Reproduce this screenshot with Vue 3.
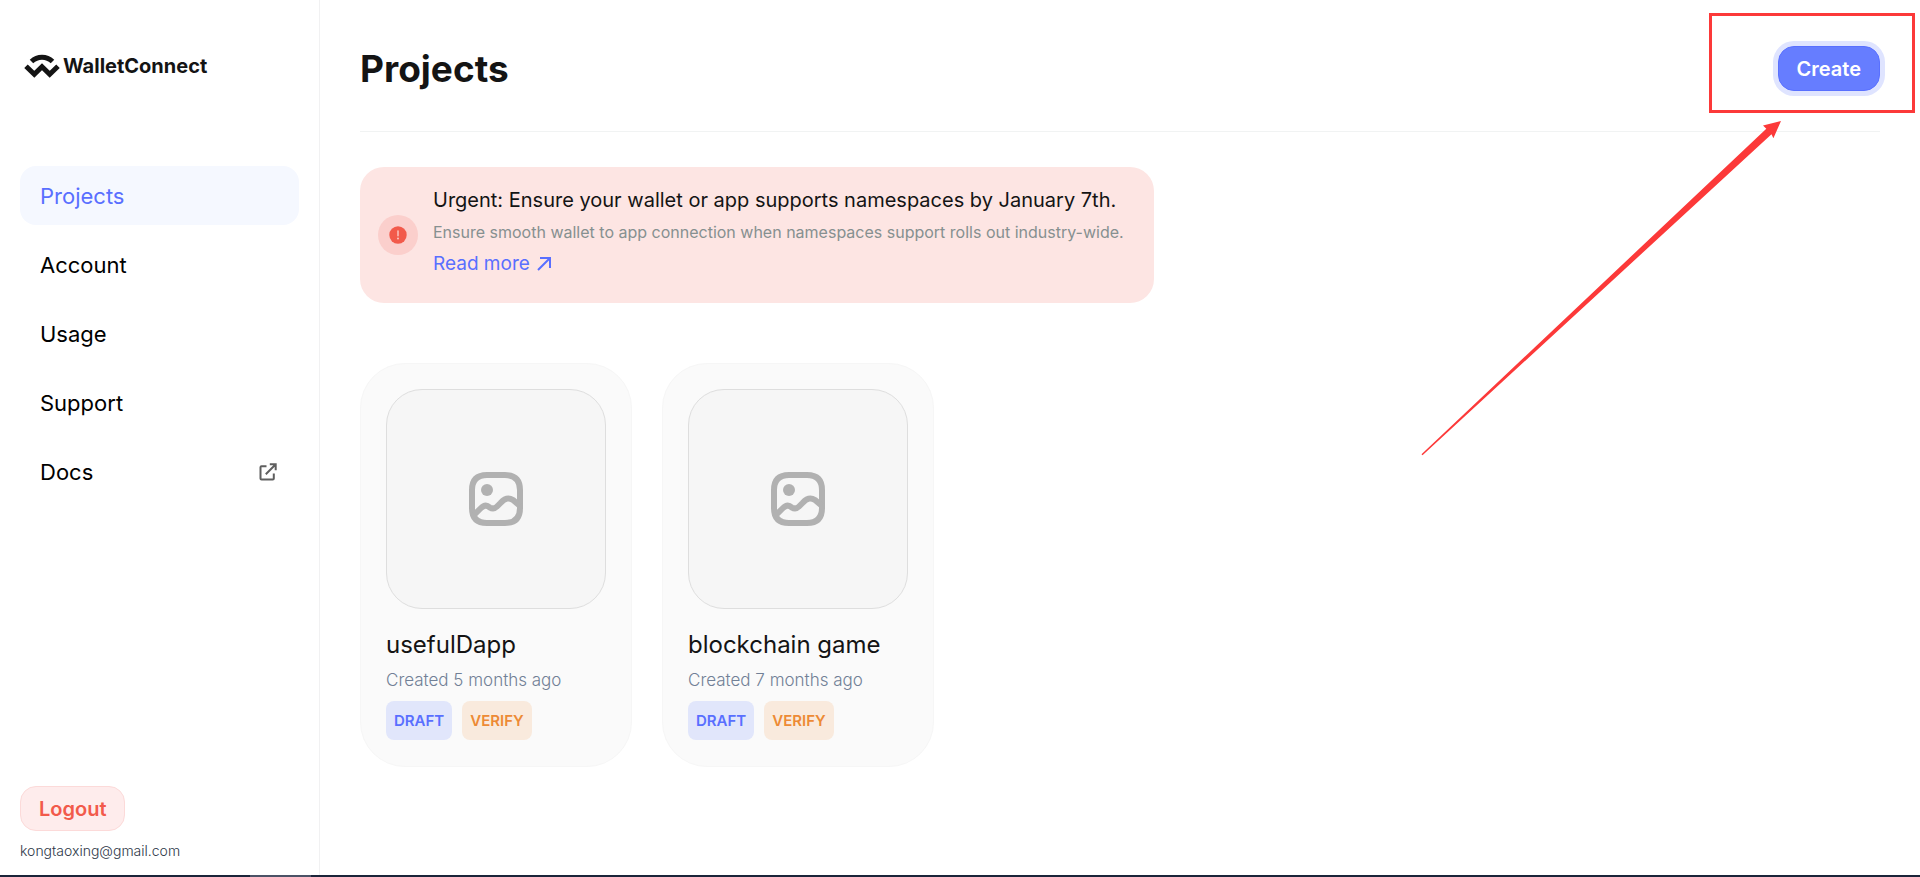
<script setup>
const navItems = [
  { label: 'Projects', active: true },
  { label: 'Account' },
  { label: 'Usage' },
  { label: 'Support' },
  { label: 'Docs', external: true },
]

const projects = [
  { name: 'usefulDapp', created: 'Created 5 months ago' },
  { name: 'blockchain game', created: 'Created 7 months ago' },
]
</script>

<template>
  <div class="screen">
    <div class="layout">
      <aside class="sidebar">
        <a class="logo" href="#">
          <svg class="logo-mark" viewBox="0 0 36 24" aria-hidden="true">
            <path d="M7.5 7.5C13.5 1.7 22.500 1.7 28.500 7.5" />
            <path d="M2 12.200L10.300 20.200L18 12.700L25.700 20.200L34 12.200" />
          </svg>
          <span class="logo-name">WalletConnect</span>
        </a>

        <nav class="nav">
          <a
            v-for="item in navItems"
            :key="item.label"
            class="nav-item"
            :class="{ active: item.active }"
            href="#"
          >
            <span>{{ item.label }}</span>
            <svg v-if="item.external" class="external" viewBox="0 0 18 18" aria-hidden="true">
              <path d="M7.500 3.200H2.500Q1.500 3.200 1.500 4.200V15.500Q1.500 16.500 2.500 16.500H13.800Q14.800 16.500 14.800 15.500V10.500" />
              <path d="M6.800 11.200L16.500 1.500M10.800 1.300H16.700V7.200" />
            </svg>
          </a>
        </nav>

        <div class="account">
          <button class="logout" type="button">Logout</button>
          <span class="email">kongtaoxing@gmail.com</span>
        </div>
      </aside>

      <main class="main">
        <header class="header">
          <h1>Projects</h1>
          <button class="create" type="button">Create</button>
        </header>

        <section class="banner">
          <span class="alert">
            <svg viewBox="0 0 18 18" aria-hidden="true">
              <circle cx="9" cy="9" r="8.700" fill="#f25a4b" />
              <path d="M9 5V9.800" stroke="#fbd5d2" stroke-width="1.300" stroke-linecap="round" />
              <circle cx="9" cy="12.500" r="0.900" fill="#fbd5d2" />
            </svg>
          </span>
          <div class="banner-text">
            <p class="banner-title">Urgent: Ensure your wallet or app supports namespaces by January 7th.</p>
            <p class="banner-sub">Ensure smooth wallet to app connection when namespaces support rolls out industry-wide.</p>
            <a class="read-more" href="#">
              Read more
              <svg viewBox="0 0 16 16" aria-hidden="true">
                <path d="M2 14L14 2M4 2H14V12" />
              </svg>
            </a>
          </div>
        </section>

        <section class="cards">
          <article v-for="project in projects" :key="project.name" class="card">
            <div class="thumb">
              <svg viewBox="0 0 54 54" aria-hidden="true">
                <path d="M18 3H36C46 3 51 8 51 18V36C51 46 46 51 36 51H18C8 51 3 46 3 36V18C3 8 8 3 18 3Z" />
                <path d="M5 43L11.500 36.500C15 33 18 33 20.500 35.300C23.500 37 25.500 37 28 34.500L31.500 31C36.500 25.500 40 25.500 44 28L50.500 33.500" />
                <circle cx="18" cy="18" r="6" />
              </svg>
            </div>
            <h2>{{ project.name }}</h2>
            <p class="created">{{ project.created }}</p>
            <div class="tags">
              <span class="tag draft">DRAFT</span>
              <span class="tag verify">VERIFY</span>
            </div>
          </article>
        </section>

        <div class="highlight"></div>
        <svg class="arrow" viewBox="0 0 360 335" aria-hidden="true">
          <path d="M0.500 333.300L345.300 7.700L342 4.500L360 0L352.400 17.200L350.500 13.200L1.500 334.300Z" />
        </svg>
      </main>
    </div>
    <div class="taskbar"><span></span></div>
  </div>
</template>

<style>
body {
  background: #fff;
}
</style>

<style scoped>
.screen {
  display: flex;
  flex-direction: column;
  min-height: 100vh;
  font-family: Inter, "Liberation Sans", sans-serif;
  color: #141414;
}

.screen *,
.screen {
  box-sizing: border-box;
}

h1,
h2,
p {
  margin: 0;
}

a {
  color: inherit;
  text-decoration: none;
}

button {
  font-family: inherit;
  cursor: pointer;
}

.layout {
  flex: 1;
  display: grid;
  grid-template-columns: 320px 1fr;
}

.sidebar {
  display: flex;
  flex-direction: column;
  padding: 54px 20px 15px;
  border-right: 1px solid #f1f1f2;
}

.logo {
  display: flex;
  align-items: center;
  gap: 3px;
  height: 24px;
  padding-left: 4px;
}

.logo-mark {
  width: 36px;
  height: 24px;
  fill: none;
  stroke: #141414;
  stroke-width: 5;
}

.logo-name {
  font-size: 20px;
  font-weight: 700;
  line-height: 24px;
}

.nav {
  display: flex;
  flex-direction: column;
  gap: 10px;
  margin-top: 88px;
}

.nav-item {
  display: flex;
  align-items: center;
  justify-content: space-between;
  height: 59px;
  padding: 0 22px 0 20px;
  border-radius: 16px;
  font-size: 22px;
  line-height: 28px;
  color: #000;
}

.nav-item.active {
  background: #f5f8ff;
  color: #596fff;
}

.external {
  width: 18px;
  height: 18px;
  fill: none;
  stroke: #5f5f5f;
  stroke-width: 2;
}

.account {
  display: flex;
  flex-direction: column;
  align-items: flex-start;
  gap: 11px;
  margin-top: auto;
}

.logout {
  height: 45px;
  padding: 0 18px;
  border: 1px solid #fcdad9;
  border-radius: 16px;
  background: #feecec;
  color: #f25a4b;
  font-size: 20px;
  font-weight: 600;
}

.email {
  font-size: 14px;
  font-weight: 300;
  line-height: 18px;
  color: #2d3748;
}

.main {
  position: relative;
  padding: 46px 40px 40px;
}

.header {
  display: flex;
  align-items: center;
  justify-content: space-between;
  padding-bottom: 40px;
  border-bottom: 1px solid #f1f3f3;
}

h1 {
  font-size: 37px;
  font-weight: 700;
  line-height: 44px;
}

.create {
  height: 45px;
  padding: 0 18px;
  border: 1px solid #5970ff;
  border-radius: 16px;
  background: #667dff;
  box-shadow: 0 0 0 5px #dfe4ff;
  color: #fff;
  font-size: 20px;
  font-weight: 600;
}

.banner {
  display: flex;
  align-items: center;
  gap: 15px;
  max-width: 794px;
  margin-top: 35px;
  padding: 18px;
  min-height: 136px;
  border-radius: 24px;
  background: #fde5e3;
}

.alert {
  display: grid;
  place-items: center;
  flex: none;
  width: 40px;
  height: 40px;
  border-radius: 50%;
  background: #fbcfcc;
}

.alert svg {
  width: 18px;
  height: 18px;
}

.banner-text {
  display: flex;
  flex-direction: column;
  gap: 4px;
  padding-bottom: 6px;
}

.banner-title {
  font-size: 20px;
  line-height: 28px;
}

.banner-sub {
  font-size: 16px;
  line-height: 28px;
  color: #869090;
}

.read-more {
  display: flex;
  align-items: center;
  gap: 6px;
  font-size: 19px;
  line-height: 28px;
  color: #596fff;
}

.read-more svg {
  width: 16px;
  height: 16px;
  fill: none;
  stroke: currentColor;
  stroke-width: 2;
}

.cards {
  display: flex;
  flex-wrap: wrap;
  gap: 30px;
  margin-top: 60px;
}

.card {
  width: 272px;
  padding: 25px 25px 26px;
  border: 1px solid #f6f6f6;
  border-radius: 45px;
  background: #fafafa;
}

.thumb {
  display: grid;
  place-items: center;
  height: 220px;
  border: 1px solid #dedede;
  border-radius: 36px;
  background: #f6f6f6;
}

.thumb svg {
  width: 54px;
  height: 54px;
}

.thumb path {
  fill: none;
  stroke: #b1b1b1;
  stroke-width: 6;
}

.thumb circle {
  fill: #b1b1b1;
}

h2 {
  margin-top: 21px;
  font-size: 24px;
  font-weight: 400;
  line-height: 30px;
}

.created {
  margin-top: 8px;
  font-size: 17px;
  font-weight: 300;
  line-height: 24px;
  color: #718096;
}

.tags {
  display: flex;
  gap: 10px;
  margin-top: 9px;
}

.tag {
  padding: 0 8px;
  border-radius: 8px;
  font-size: 15px;
  font-weight: 600;
  line-height: 39px;
}

.draft {
  background: #e1e6fb;
  color: #596fff;
}

.verify {
  background: #f9eadd;
  color: #ed8a35;
}

.highlight {
  position: absolute;
  top: 13px;
  right: 5px;
  width: 206px;
  height: 100px;
  border: 3px solid #fc3939;
  pointer-events: none;
}

.arrow {
  position: absolute;
  top: 121px;
  right: 139px;
  width: 360px;
  height: 335px;
  fill: #fc3939;
  pointer-events: none;
}

.taskbar {
  height: 2px;
  padding-left: 250px;
  background: #1b2439;
}

.taskbar span {
  display: block;
  width: 61px;
  height: 2px;
  background: #4b5266;
}
</style>
